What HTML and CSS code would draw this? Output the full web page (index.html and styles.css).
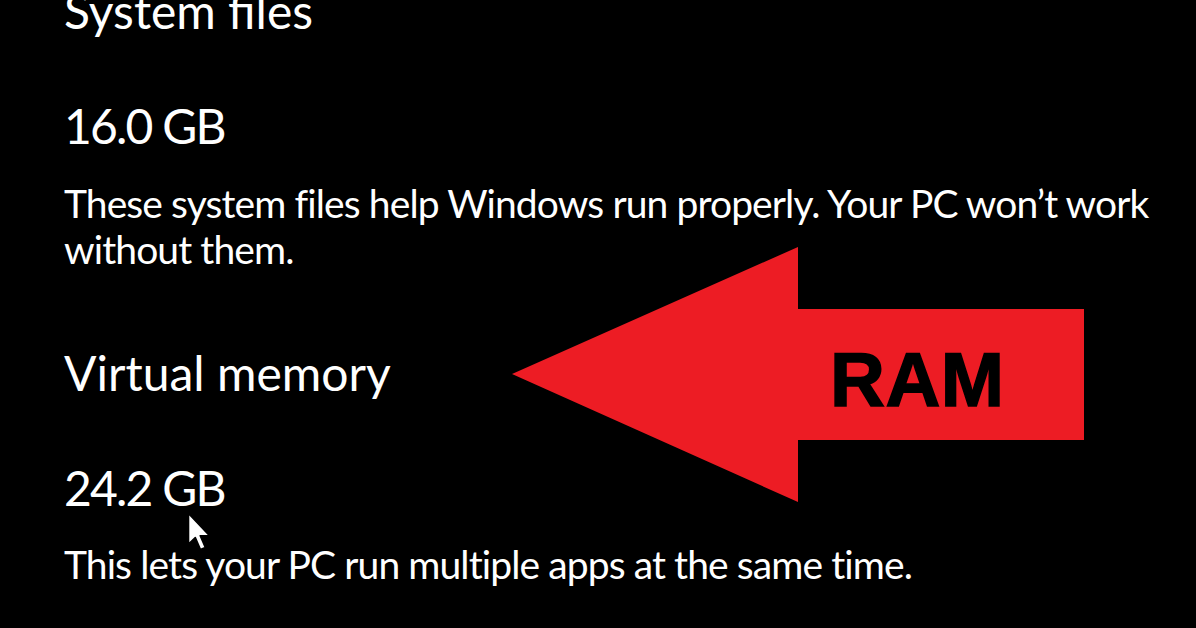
FILE: index.html
```html
<!DOCTYPE html>
<html lang="en">
<head>
<meta charset="utf-8">
<title>Storage - System &amp; reserved</title>
<link rel="stylesheet" href="styles.css">
</head>
<body>
<main class="page">
  <section class="group">
    <h2 class="title first">System files</h2>
    <div class="value">16.0 GB</div>
    <p class="desc">These system files help Windows run properly. Your PC won’t work without them.</p>
  </section>
  <section class="group">
    <h2 class="title">Virtual memory</h2>
    <div class="value">24.2 GB</div>
    <p class="desc">This lets your PC run multiple apps at the same time.</p>
  </section>
</main>
<div class="arrow">
  <svg class="arrow-shape" width="1196" height="628" viewBox="0 0 1196 628">
    <polygon points="512,374 798,247 798,309 1084,309 1084,440 798,440 798,502" fill="#ed1c24"/>
  </svg>
  <span class="arrow-label">RAM</span>
</div>
<svg class="cursor" width="30" height="44" viewBox="0 0 30 44">
  <path d="M1.5 1.5 L1.5 32 L8.3 25.5 L13.5 37.5 L18.3 35.4 L13.2 23.8 L22.5 23.8 Z" fill="#ffffff" stroke="#000000" stroke-width="1.6" stroke-linejoin="round"/>
</svg>
</body>
</html>
```

FILE: styles.css
```css
html, body {
  margin: 0;
  padding: 0;
  background: #000000;
}
body {
  width: 1196px;
  height: 628px;
  overflow: hidden;
  position: relative;
  color: #ffffff;
  font-family: Lato, "Open Sans", "DejaVu Sans", sans-serif;
}
.page {
  padding-left: 64px;
  display: flex;
  flex-direction: column;
}
.group {
  display: flex;
  flex-direction: column;
}
.title {
  margin: 0;
  font-size: 48px;
  font-weight: 400;
  line-height: 60px;
}
.title.first {
  margin-top: -19px;
}
.group + .group .title {
  margin-top: 71px;
}
.value {
  font-size: 48px;
  line-height: 60px;
  margin-top: 55px;
  letter-spacing: -1.8px;
}
.group + .group .value {
  margin-top: 55px;
}
.desc {
  margin: 24px 0 0 0;
  font-size: 39px;
  line-height: 46px;
  letter-spacing: -0.9px;
  width: 1110px;
}
.group + .group .desc {
  margin-top: 23px;
}
.arrow {
  position: absolute;
  left: 0;
  top: 0;
  width: 1196px;
  height: 628px;
}
.arrow-shape {
  position: absolute;
  left: 0;
  top: 0;
}
.arrow-label {
  position: absolute;
  left: 830px;
  top: 335px;
  font-family: "Liberation Sans", Arial, sans-serif;
  font-weight: 700;
  font-size: 76px;
  line-height: 90px;
  color: #000000;
  letter-spacing: 0.5px;
  -webkit-text-stroke: 1.5px #000000;
}
.cursor {
  position: absolute;
  left: 187px;
  top: 512px;
}
```
